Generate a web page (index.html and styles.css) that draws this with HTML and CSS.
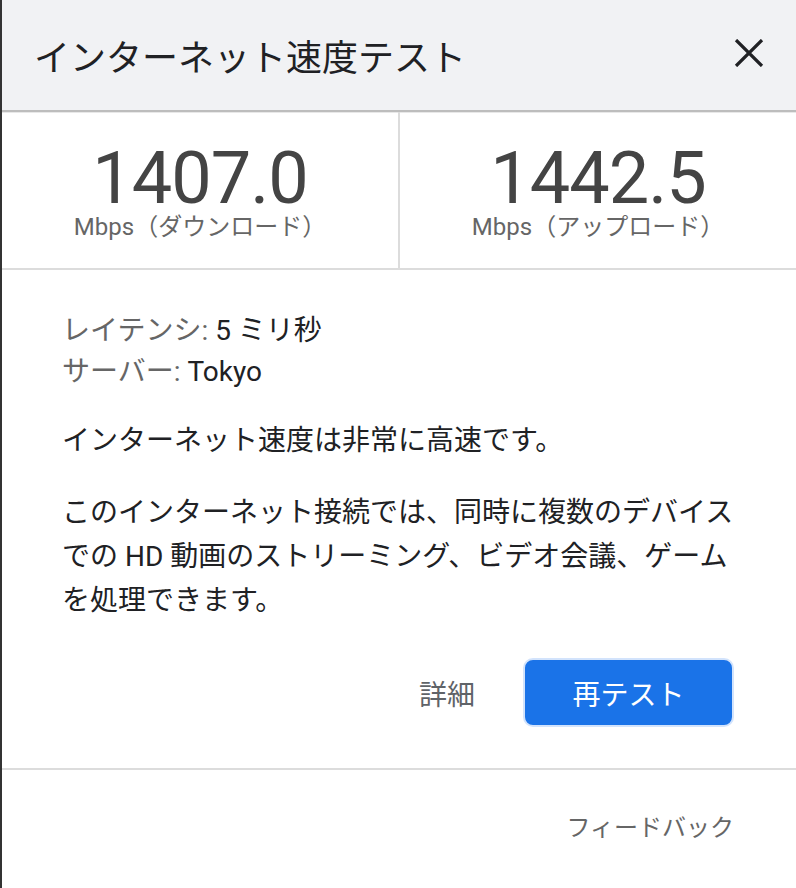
FILE: index.html
```html
<!DOCTYPE html>
<html lang="ja">
<head>
    <meta charset="UTF-8">
    <meta name="viewport" content="width=device-width, initial-scale=1.0">
    <title>インターネット速度テスト</title>
    <link rel="stylesheet" href="styles.css">
</head>
<body>

    <div class="dialog">
        <header class="dialog-head">
            <h1>インターネット速度テスト</h1>
            <button class="close" aria-label="閉じる">
                <svg width="30" height="28" viewBox="0 0 30 28">
                    <path d="M2 1 L28 27 M28 1 L2 27" stroke="#202124" stroke-width="3.2" fill="none"/>
                </svg>
            </button>
        </header>

        <section class="stats">
            <div class="stat">
                <div class="stat-value">1407.0</div>
                <div class="stat-unit">Mbps（ダウンロード）</div>
            </div>
            <div class="stat">
                <div class="stat-value">1442.5</div>
                <div class="stat-unit">Mbps（アップロード）</div>
            </div>
        </section>

        <section class="details">
            <div class="meta">
                <div><span class="label">レイテンシ:</span> 5 ミリ秒</div>
                <div><span class="label">サーバー:</span> Tokyo</div>
            </div>
            <p class="summary">インターネット速度は非常に高速です。</p>
            <p class="desc">このインターネット接続では、同時に複数のデバイスでの HD 動画のストリーミング、ビデオ会議、ゲームを処理できます。</p>
            <div class="actions">
                <button class="btn-link">詳細</button>
                <button class="btn-primary">再テスト</button>
            </div>
        </section>

        <footer class="dialog-foot">
            <a href="#" class="feedback">フィードバック</a>
        </footer>
    </div>

</body>
</html>
```

FILE: styles.css
```css
body {
    margin: 0;
    font-family: Roboto, "Noto Sans CJK JP", sans-serif;
    color: #202124;
    background-color: #ffffff;
}
.dialog {
    height: 888px;
    border-left: 2px solid #333;
    box-sizing: border-box;
    overflow: hidden;
}
.dialog-head {
    height: 110px;
    background-color: #f1f2f4;
    border-bottom: 2px solid #bdbdbd;
    box-shadow: 0 1px 0 #e8e8e8;
    display: flex;
    align-items: center;
    justify-content: space-between;
    padding: 0 32px 0 32px;
}
.dialog-head h1 {
    margin: 0;
    font-family: "Noto Sans CJK JP", sans-serif;
    font-size: 36px;
    font-weight: 400;
    color: #202124;
}
.close {
    background: none;
    border: none;
    padding: 0;
    margin-top: -4px;
    cursor: pointer;
    display: flex;
}
.stats {
    display: flex;
    border-bottom: 2px solid #dcdcdc;
}
.stat {
    flex: 1;
    text-align: center;
    padding: 35px 0 27px;
}
.stat + .stat {
    border-left: 2px solid #dcdcdc;
}
.stat-value {
    font-family: Roboto, sans-serif;
    font-size: 72px;
    line-height: 64px;
    color: #444;
    letter-spacing: -1px;
}
.stat-unit {
    margin-top: 2px;
    font-size: 24px;
    line-height: 28px;
    color: #666;
}
.details {
    padding: 40px 58px 41px 60px;
    border-bottom: 2px solid #dcdcdc;
    font-family: Roboto, "Noto Sans CJK JP", sans-serif;
    font-size: 28px;
}
.meta {
    line-height: 41px;
    color: #202124;
}
.label {
    color: #666;
}
.summary {
    margin: 27px 0 0;
    line-height: 44px;
}
.desc {
    margin: 28px 0 0;
    line-height: 44px;
}
.actions {
    display: flex;
    justify-content: flex-end;
    align-items: center;
    gap: 48px;
    margin-top: 35px;
    margin-right: 4px;
}
.btn-link {
    background: none;
    border: none;
    padding: 0;
    font-family: inherit;
    font-size: 28px;
    color: #5f6368;
    cursor: pointer;
}
.btn-primary {
    width: 211px;
    height: 69px;
    background-color: #1a73e8;
    border: 2px solid #d2e3fc;
    border-radius: 10px;
    color: #ffffff;
    font-family: inherit;
    font-size: 28px;
    cursor: pointer;
}
.dialog-foot {
    display: flex;
    justify-content: flex-end;
    padding: 40px 62px 0;
}
.feedback {
    font-family: "Noto Sans CJK JP", sans-serif;
    font-size: 24px;
    line-height: 32px;
    color: #666;
    text-decoration: none;
}
```
